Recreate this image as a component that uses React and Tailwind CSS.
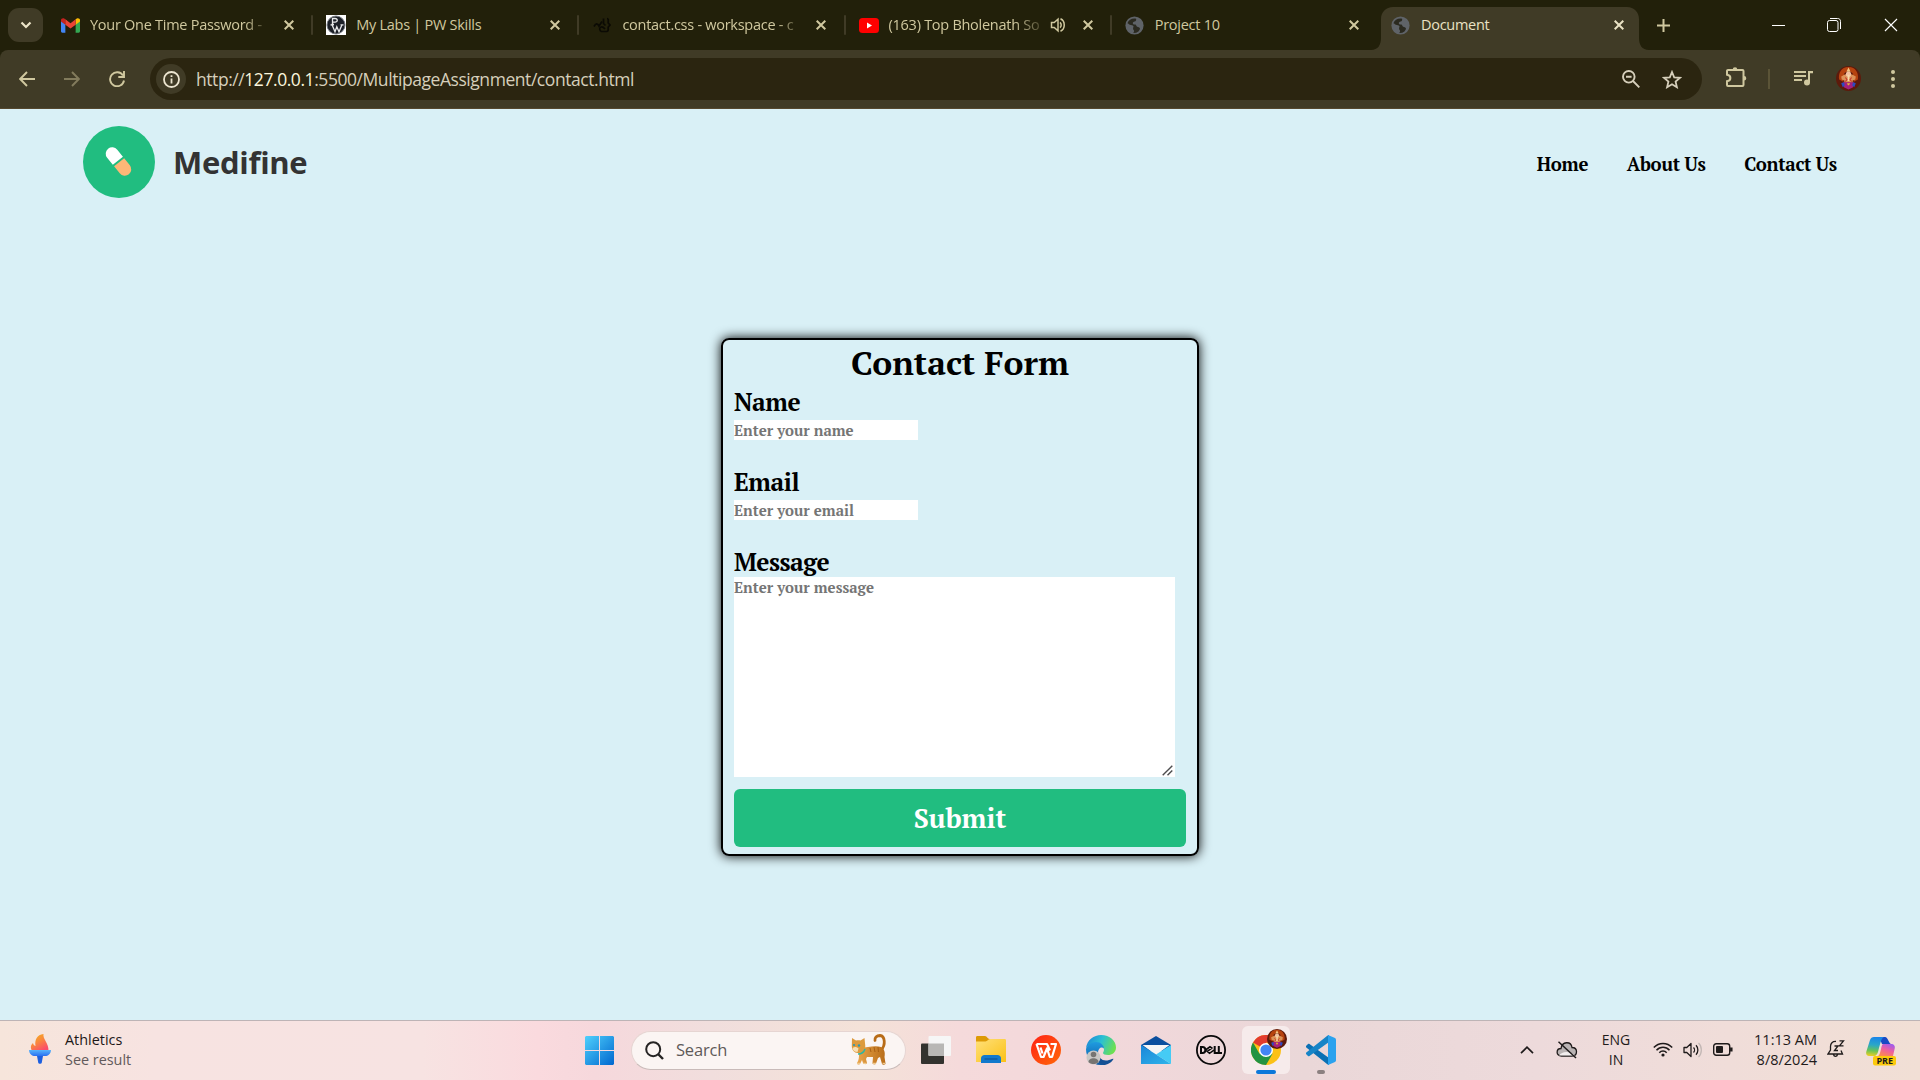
import React from 'react';

const GmailIcon = () => (
  <svg width="19" height="15" viewBox="0 0 24 18" className="shrink-0">
    <path fill="#4285f4" d="M0 3v13.400C0 17.300.7 18 1.600 18H5.500V7.500z" />
    <path fill="#34a853" d="M24 3v13.400c0 .9-.7 1.600-1.600 1.600H18.500V7.500z" />
    <path fill="#fbbc04" d="M18.500 1.200V8l5.500-4.200V2.200C24 .2 21.600-.8 20 .2z" />
    <path fill="#c5221f" d="M0 2.200v1.600L5.500 8V1.200L4 .2C2.400-.8 0 .2 0 2.200z" />
    <path fill="#ea4335" d="M5.500 1.200V8l6.500 4.900L18.500 8V1.200L12 6z" />
  </svg>
);

const PwIcon = () => (
  <svg width="20" height="20" viewBox="0 0 20 20" className="shrink-0">
    <rect width="20" height="20" fill="#fff" />
    <circle cx="10" cy="10" r="9" fill="#1c2027" stroke="#777b82" strokeWidth="1" />
    <g fill="none" stroke="#e8e9ea" strokeWidth="1.300">
      <path d="M6.500 9.500V3.500h2.500c3 0 3 3.700 0 3.700H6.500M5.500 9.500h2.500" />
      <path d="M6 9.800l3 7 1.800-5 2.200 5 3-7M4.500 9.800h3M14.500 9.800h3" />
    </g>
  </svg>
);

const CssIcon = () => (
  <svg width="18" height="16" viewBox="0 0 18 16" fill="none" stroke="#0b0a04" strokeWidth="1.700" className="shrink-0">
    <path d="M1 9.500C3 6 4.500 6 6 9l3-4.500" />
    <path d="M14 1.500c2 0 1 3 1.200 4.500L17 8l-1.800 2c-.2 2 .6 4.500-1.700 4.500H8.500C6.500 14 6 10.500 8 10c1.800-.5 3 .8 4 2" />
    <path d="M10.500 1.500v5l2 2" />
  </svg>
);

const YoutubeIcon = () => (
  <svg width="20" height="15" viewBox="0 0 20 15" className="shrink-0">
    <rect width="20" height="15" rx="3.500" fill="#f00" />
    <path d="M8 4.500v6l5-3z" fill="#fff" />
  </svg>
);

const GlobeIcon = () => (
  <svg width="19" height="19" viewBox="0 0 24 24" className="shrink-0">
    <circle cx="12" cy="12" r="11.500" fill="#5f6368" />
    <path fill="#2b2a20" d="M14 3.500c.5 1.800-.2 3-1.800 3.600-1.400.5-2.800 1.200-2.200 2.600.5 1.300 2 .6 3.300 1.100 1.100.5.800 1.700 1.700 2.400 1.400 1.100 3.700.8 3.900 2.700.1 1.600-1.200 2.400-1.900 3.600a9.500 9.500 0 0 1-6.500 2c.3-1 1-1.400 1-2.500 0-1.200-1.200-1.500-1.300-2.900-.1-1.300.8-2.200.4-3.400-.7-1.500-2.900-1-4.400-1.700C5 10.500 4.500 9.300 3 9c1.500-4 6-6.500 11-5.500z" />
  </svg>
);

const Cross = ({ size = 10, w = 2 }) => (
  <svg width={size} height={size} viewBox="0 0 10 10" fill="none" stroke="currentColor" strokeWidth={w} className="shrink-0">
    <path d="M.7.7l8.600 8.600M9.300.7L.7 9.300" />
  </svg>
);

const Speaker = () => (
  <svg width="16" height="16" viewBox="0 0 16 16" fill="none" stroke="currentColor" strokeWidth="1.500" className="shrink-0">
    <path d="M1.500 5.500v5h2.700L8 13.800V2.200L4.200 5.500z" strokeLinejoin="miter" />
    <path d="M10 5.300c1.600 1.300 1.600 4.100 0 5.400M10.500 1.800c5 2.200 5 10.200 0 12.400" />
  </svg>
);

const Avatar = ({ className }) => (
  <svg viewBox="0 0 24 24" className={className}>
    <circle cx="12" cy="12" r="12" fill="#5d1a0b" />
    <path d="M12 1C5 1 2 7 3 13l4 2 1-8 4-3 4 3 1 8 4-2c1-6-2-12-9-12z" fill="#b6430f" />
    <path d="M12 1.500l-2 4h4z" fill="#f3c884" />
    <path d="M8 8.500c2-1.500 6-1.500 8 0l3 1.500-.5 3-2.500 1v2H8v-2l-2.500-1L5 10z" fill="#dc9257" />
    <circle cx="12" cy="7.800" r="2.500" fill="#f3c0a0" />
    <path d="M11.300 8.500h1.700l-.3 6h-1.500z" fill="#f6d9a8" />
    <path d="M9 11l1.500 2L9 15M15 11l-1.500 2 1.500 2" stroke="#c7362d" fill="none" />
    <path d="M7 15.500h10l-.5 5L12 22.500l-4.500-2z" fill="#a5207d" />
    <path d="M5 16.500l2.500-1 1 3-2 2zM19 16.500l-2.500-1-1 3 2 2z" fill="#2c4bc0" />
    <path d="M10.500 16.500h3l-1 2h-1z" fill="#e6b32e" />
  </svg>
);

const tabs = [
  { title: 'Your One Time Password -', icon: <GmailIcon />, mask: '[mask-image:linear-gradient(to_right,#000_155px,transparent_180px)]' },
  { title: 'My Labs | PW Skills', icon: <PwIcon /> },
  { title: 'contact.css - workspace - c', icon: <CssIcon />, mask: '[mask-image:linear-gradient(to_right,#000_155px,transparent_182px)]' },
  { title: '(163) Top Bholenath So', icon: <YoutubeIcon />, mask: '[mask-image:linear-gradient(to_right,#000_125px,transparent_160px)]', audio: true },
  { title: 'Project 10', icon: <GlobeIcon />, last: true },
  { title: 'Document', icon: <GlobeIcon />, active: true },
];

function Tab({ tab }) {
  return (
    <div className={`relative flex h-[50px] w-[266.2px] shrink-0 items-center ${tab.active ? 'text-[#e9e2c4]' : 'text-[#d0c89f]'}`}>
      {tab.active && (
        <svg className="absolute bottom-0 left-[-7px]" width="278" height="43" viewBox="0 0 278 43" fill="#403b26">
          <path d="M0 43C7 43 10 38 10 31V12C10 5 15 0 22 0H256c7 0 12 5 12 12V31c0 7 3 12 10 12z" />
        </svg>
      )}
      <div className="relative ml-[13px] flex w-5 shrink-0 justify-center">{tab.icon}</div>
      <div className={`relative ml-2.5 whitespace-nowrap text-[14.500px] tracking-[-0.270px] ${tab.audio ? 'w-[153px]' : 'w-[177px]'} ${tab.mask ?? ''}`}>
        {tab.title}
      </div>
      {tab.audio && <div className="ml-2 w-4"><Speaker /></div>}
      <div className={`relative ${tab.active ? 'ml-4' : 'ml-[17px]'}`}><Cross /></div>
      {!tab.active && !tab.last && <div className="ml-auto h-5 w-0.5 rounded bg-[#403b26]" />}
    </div>
  );
}

function TabStrip() {
  return (
    <div className="flex h-[50px] bg-[#22200a]">
      <div className="flex w-[47px] shrink-0 items-center pl-2">
        <div className="flex h-[34px] w-[35px] items-center justify-center rounded-[11px] bg-[#403b26]">
          <svg width="12" height="8" viewBox="0 0 12 8" fill="none" stroke="#ece5c8" strokeWidth="2.200"><path d="M1.500 1.500L6 6l4.500-4.500" /></svg>
        </div>
      </div>
      {tabs.map((t) => <Tab key={t.title} tab={t} />)}
      <div className="ml-[13px] flex items-center text-[#d0c89f]">
        <svg width="13" height="13" viewBox="0 0 13 13" stroke="currentColor" strokeWidth="2"><path d="M6.500 0v13M0 6.500h13" /></svg>
      </div>
      <div className="ml-auto flex items-center text-white">
        <div className="flex w-[56px] justify-center"><div className="h-px w-[13px] bg-white" /></div>
        <div className="flex w-[56px] justify-center">
          <svg width="14" height="14" viewBox="0 0 14 14" fill="none" stroke="currentColor">
            <rect x=".5" y="2.500" width="10.500" height="11" rx="2" />
            <path d="M3 .5h7.500c2 0 3 1 3 3V11" />
          </svg>
        </div>
        <div className="mr-[1px] flex w-[57px] justify-center"><Cross size={14} w={0.8} /></div>
      </div>
    </div>
  );
}

function Toolbar() {
  return (
    <div className="bg-[#22200a]">
      <div className="flex h-[59px] items-center rounded-t-lg border-b border-[#55482f] bg-[#403b26] text-[#d0c89f]">
        <svg className="ml-[19px]" width="16" height="16" viewBox="0 0 16 16" fill="none" stroke="currentColor" strokeWidth="1.900"><path d="M16 8H1.500M8 1L1.200 8 8 15" /></svg>
        <svg className="ml-[29px] text-[#827b5c]" width="16" height="16" viewBox="0 0 16 16" fill="none" stroke="currentColor" strokeWidth="1.900"><path d="M0 8h14.500M8 1l6.800 7L8 15" /></svg>
        <svg className="ml-[29px]" width="16" height="16" viewBox="0 0 16 16" fill="none" stroke="currentColor" strokeWidth="1.900"><path d="M14 4.500A7 7 0 1 0 15 9.500M15 0v6H9.300" /></svg>
        <div className="ml-[25px] flex h-[42px] w-[1552px] items-center rounded-full bg-[#2b2510] text-[#d6cfbb]">
          <div className="ml-1.5 flex size-[30px] items-center justify-center rounded-full bg-[#403b26] text-[#ece5d0]">
            <svg width="17" height="17" viewBox="0 0 17 17" fill="none" stroke="currentColor" strokeWidth="1.800"><circle cx="8.500" cy="8.500" r="7.500" /><path d="M8.500 7.500v5M8.500 4.300v1.800" /></svg>
          </div>
          <div className="ml-[10px] mt-px whitespace-nowrap text-[17.500px] tracking-[-0.440px]">http://<span className="text-[#fbf6dd]">127.0.0.1</span>:5500/MultipageAssignment/contact.html</div>
          <svg className="ml-auto" width="18" height="18" viewBox="0 0 18 18" fill="none" stroke="currentColor" strokeWidth="1.900"><circle cx="6.800" cy="6.800" r="5.800" /><path d="M11 11l6.300 6.300M4 6.800h5.600" /></svg>
          <svg className="mr-5 ml-[22px]" width="20" height="19" viewBox="0 0 20 19" fill="none" stroke="currentColor" strokeWidth="1.800"><path d="M10 2l2.200 5.300 5.800.5-4.400 3.800 1.300 5.600-4.900-3-4.900 3 1.300-5.600L2 7.800l5.800-.5z" /></svg>
        </div>
        <svg className="mb-1 ml-[23px]" width="22" height="21" viewBox="0 0 21 21" fill="none" stroke="currentColor" strokeWidth="2">
          <path d="M2.500 3H17a1 1 0 0 1 1 1V18a1 1 0 0 1-1 1H2.500a1 1 0 0 1-1-1v-3.800c4.500-.5 4.500-6 0-6.500V4a1 1 0 0 1 1-1z" />
          <path d="M7.200 2.500a2.300 2.300 0 0 1 4.600 0zM18.500 9a2.300 2.300 0 0 1 0 4.600z" fill="currentColor" stroke="none" />
        </svg>
        <div className="ml-[21px] h-5 w-0.5 bg-[#5b5437]" />
        <svg className="mb-0.5 ml-6" width="20" height="17" viewBox="0 0 20 17" fill="currentColor">
          <path d="M0 1h12v2H0zM0 5h12v2H0zM0 9h8v2H0zM14 1h5v2.200h-3v9h-2z" /><circle cx="13" cy="12.500" r="3" />
        </svg>
        <Avatar className="mb-0.5 ml-[22px] size-[25px]" />
        <svg className="ml-[30px]" width="4" height="18" viewBox="0 0 4 18" fill="currentColor"><circle cx="2" cy="2" r="2" /><circle cx="2" cy="9" r="2" /><circle cx="2" cy="16" r="2" /></svg>
      </div>
    </div>
  );
}

function SiteHeader() {
  return (
    <header className="flex h-[106px] items-center justify-between pl-[83px] pr-[83px]">
      <div className="flex items-center">
        <svg width="72" height="72" viewBox="0 0 72 72">
          <circle cx="36" cy="36" r="36" fill="#21bd80" />
          <g transform="rotate(-39 35.500 35.500)">
            <path d="M29 34.500V25.500a6.500 6.500 0 0 1 13 0v9z" fill="#fff" />
            <path d="M29 36.500v9a6.500 6.500 0 0 0 13 0v-9z" fill="#fdb777" />
          </g>
        </svg>
        <div className="ml-[18px] mt-[1px] text-[31px] font-bold tracking-[-0.300px] text-[#333]">Medifine</div>
      </div>
      <nav className="mt-1 flex gap-[38.500px] font-['PT_Serif','Liberation_Serif',serif] text-[18.600px] font-bold leading-6 tracking-[-0.270px] text-black">
        <a>Home</a><a>About Us</a><a>Contact Us</a>
      </nav>
    </header>
  );
}

function Field({ label, placeholder }) {
  return (
    <div className="mb-[24px] flex h-[56px] flex-col">
      <label className="h-9 text-[24.500px] font-bold leading-[36px] tracking-[-0.450px]">{label}</label>
      <input placeholder={placeholder} className="h-5 w-[184px] bg-white text-[15px] font-bold leading-5 placeholder:text-[#757575]" />
    </div>
  );
}

function ContactForm() {
  return (
    <form className="mx-auto mt-[123px] flex h-[518px] w-[478px] flex-col rounded-lg border-2 border-black px-[11px] font-['PT_Serif','Liberation_Serif',serif] text-black shadow-[0_0_12px_#000]">
      <h1 className="h-[44px] text-center text-[33.600px] font-bold leading-[46px]">Contact Form</h1>
      <Field label="Name" placeholder="Enter your name" />
      <Field label="Email" placeholder="Enter your email" />
      <label className="h-[33px] text-[24.500px] font-bold leading-[36px] tracking-[-0.500px]">Message</label>
      <div className="relative h-[200px] w-[441px]">
        <textarea placeholder="Enter your message" className="block h-full w-full resize-none bg-white text-[15px] font-bold leading-5 placeholder:text-[#757575]" />
        <svg className="pointer-events-none absolute bottom-px right-0.5" width="11" height="11" viewBox="0 0 11 11" stroke="#4d4d4f" strokeWidth="1.400">
          <path d="M.7 10.300l9.600-9.600M5.500 10.300l4.800-4.800" />
        </svg>
      </div>
      <button type="button" className="mt-3 h-[58px] rounded-md bg-[#21bd80] text-[27px] font-bold text-white">Submit</button>
    </form>
  );
}

const Torch = () => (
  <svg width="22" height="30" viewBox="0 0 22 30">
    <defs>
      <linearGradient id="fl" x1="0" y1="0" x2=".6" y2="1"><stop offset="0" stopColor="#f2b619" /><stop offset=".5" stopColor="#f98a3c" /><stop offset="1" stopColor="#fb4c6b" /></linearGradient>
      <linearGradient id="bl" x1="0" y1="0" x2="0" y2="1"><stop offset="0" stopColor="#58b4fb" /><stop offset="1" stopColor="#2a6ff0" /></linearGradient>
    </defs>
    <path d="M3 17C1 13 2 11 4 9c.3 1.500 1 2.500 2.500 3C5.500 6 8 .8 14.500 0 13.500 5 20 9 19.500 17z" fill="url(#fl)" />
    <path d="M0 16h22c-.3 4-3 6-6 6H6c-3 0-5.700-2-6-6z" fill="url(#bl)" />
    <path d="M8 22h6l-1.300 7c-.2 1-3.200 1-3.400 0z" fill="#1c5fe0" />
  </svg>
);

const WindowsLogo = () => (
  <svg width="29" height="29" viewBox="0 0 29 29">
    <defs><linearGradient id="win" gradientUnits="userSpaceOnUse" x1="0" y1="0" x2="29" y2="29"><stop offset="0" stopColor="#4fd0fc" /><stop offset="1" stopColor="#0067cf" /></linearGradient></defs>
    <path d="M1 0h13v14H0V1zM15 0h13l1 1v13H15zM0 15h14v14H1l-1-1zM15 15h14v13l-1 1H15z" fill="url(#win)" />
  </svg>
);

const Cat = () => (
  <svg width="37" height="31" viewBox="0 0 37 31">
    <defs><linearGradient id="cat" x1="0" y1="0" x2="1" y2="0"><stop offset="0" stopColor="#eaa64c" /><stop offset="1" stopColor="#b86c18" /></linearGradient></defs>
    <path d="M31 16c5-5 4-14-1-14.500-3.500 0-5.500 2.500-5 5" fill="none" stroke="#b86c18" strokeWidth="2.800" strokeLinecap="round" />
    <path d="M11 14c6-1 15-3 20-1 3 1.500 4.500 5 3.500 10l1 6.500c0 1.500-3 1.500-3.500.5L30 23l-2 1-2 5.500c-.5 1.500-4 1-3.500-.5L23 23h-6l-1 2 1 4c0 1.500-3.500 1.500-4 0l-1-3-2 4c-1 1-3.500.5-3-1 2-3 2-6 2-9z" fill="url(#cat)" />
    <path d="M2 4l4 2.500C8 6 9 6 10.500 6.500L14.500 4l.8 8c0 5-3.500 7-7.500 7-3.500 0-6-3-6-7z" fill="#dc9a3e" />
    <path d="M2.500 14c2-1.500 4-1.500 6 .5l-1 3.500c-3 0-4.500-1.500-5-4z" fill="#f8dfb4" />
    <circle cx="4" cy="11" r="1.100" fill="#2a99b4" /><circle cx="9" cy="11.500" r="1.200" fill="#2a99b4" />
    <path d="M8 20c3.500 0 6-2 7-5" fill="none" stroke="#2fb5a0" strokeWidth="1.500" />
    <path d="M20 14l1 4M24 13l1 5M28 13l.5 5" stroke="#a85f14" strokeWidth="1" />
    <path d="M7 29.300h3M13 29.300h3.500M23 29.300h3M32.500 29.300H35" stroke="#f0c98c" strokeWidth="1.300" />
  </svg>
);

const TaskView = () => (
  <svg width="30" height="28" viewBox="0 0 30 28">
    <rect y="7.500" width="23" height="20.500" rx="1" fill="#33332f" />
    <rect x="7.500" width="22.500" height="20" rx="1" fill="#f6f6f6" />
    <path d="M7.500 7.500H23V20H8.500a1 1 0 0 1-1-1z" fill="#b8b7b5" />
  </svg>
);

const Explorer = () => (
  <svg width="30" height="27" viewBox="0 0 30 27">
    <defs><linearGradient id="ex" x1="0" y1="0" x2="1" y2="1"><stop offset="0" stopColor="#ffe07a" /><stop offset="1" stopColor="#fbc116" /></linearGradient></defs>
    <path d="M0 1.500C0 .5.500 0 1.500 0H9c2 0 2.500 3 4.500 3H28v6H0z" fill="#dd9a05" />
    <path d="M0 5.500h9.500C11.500 5.500 12 3 14 3h14.500c1 0 1.500.5 1.500 1.500V26H0z" fill="url(#ex)" />
    <path d="M5 27v-4.500c0-2 1.500-3.500 3.500-3.500h13c2 0 3.500 1.500 3.500 3.500V27z" fill="#1279cc" />
    <path d="M8.500 23h13" stroke="#0c4f8d" />
  </svg>
);

const Wps = () => (
  <svg width="30" height="30" viewBox="0 0 30 30">
    <defs><linearGradient id="wps" x1="0" y1="0" x2="1" y2="1"><stop offset="0" stopColor="#ff2016" /><stop offset="1" stopColor="#ff6a08" /></linearGradient></defs>
    <circle cx="15" cy="15" r="15" fill="url(#wps)" />
    <path d="M5.500 9H16l3 6.500M5.500 9l4.500 13h2.500L16 13.500l2.800 8.500h2.200L25 9h-5.500M9.500 12.500l2 6" fill="none" stroke="#fff" strokeWidth="2.200" strokeLinejoin="round" />
  </svg>
);

const Edge = () => (
  <svg width="31" height="30" viewBox="0 0 31 30">
    <defs>
      <linearGradient id="e1" x1="0" y1=".2" x2="1" y2=".5"><stop offset="0" stopColor="#1b87d8" /><stop offset=".5" stopColor="#2bc0d3" /><stop offset="1" stopColor="#6ee050" /></linearGradient>
      <linearGradient id="e2" x1="0" y1="0" x2="0" y2="1"><stop offset="0" stopColor="#1f9be0" /><stop offset="1" stopColor="#0c59a4" /></linearGradient>
    </defs>
    <path d="M0 13C1 5 8 0 15 0c9 0 15 6 15 12.500 0 5-4 7.500-8 7.500-3 0-5-1-5-2 0-.8 1-1.500 1-3.500 0-3-3-6-8-6-4 0-8 2-10 4.500z" fill="url(#e1)" />
    <path d="M0 14c1-4 6-7 10-7 5 0 8 3.500 8 6.500-2-2-6-1-6 5 0 5 4 9.500 9 9.500-2 1.500-4 2-6.500 2C6 30 0 23 0 14z" fill="url(#e2)" />
    <path d="M12 17c0 6 5 10 11 8 2-.5 4-2 4.500-1-2 3.500-6 6-10 6-5.500-1-8-7-5.500-13z" fill="#134f93" />
    <circle cx="7.500" cy="22.500" r="7" fill="#c9c7c5" /><circle cx="7.500" cy="19.500" r="2.800" fill="#767472" /><path d="M2.500 27c0-5 10-5 10 0-2.500 2.800-7.500 2.800-10 0z" fill="#767472" />
  </svg>
);

const Mail = () => (
  <svg width="30" height="28" viewBox="0 0 30 28">
    <defs><linearGradient id="ml" x1="0" y1="0" x2="1" y2="1"><stop offset="0" stopColor="#1b86d8" /><stop offset="1" stopColor="#2fb4ea" /></linearGradient></defs>
    <path d="M0 9L15 0l15 9v6H0z" fill="#0a4f9e" />
    <path d="M1.500 9h27L15 19z" fill="#f5f5f5" />
    <path d="M0 9l16 10 14 9H0z" fill="url(#ml)" />
    <path d="M30 9v19L15 18.500z" fill="#45cbf5" />
  </svg>
);

const Dell = () => (
  <svg width="30" height="30" viewBox="0 0 30 30">
    <circle cx="15" cy="15" r="14.100" fill="none" stroke="#0a0a0a" strokeWidth="1.800" />
    <g fill="none" stroke="#0a0a0a" strokeWidth="2">
      <path d="M5 12v6H6.500c3.800 0 3.800-6 0-6z" />
      <path d="M9.500 15l4.500-3.200 2.500 1.700M11 16.600l4.500-3.200M9.500 15l4 3.300 4.500-3.200" strokeWidth="1.600" />
      <path d="M18.700 11v7H22M22.800 11v7h3.200" />
    </g>
  </svg>
);

const Chrome = () => (
  <svg width="30" height="30" viewBox="0 0 30 30">
    <circle cx="15" cy="15" r="15" fill="#fbc116" />
    <path d="M15 15L2 7.500A15 15 0 0 1 28 7.500H15z" fill="#e33b2e" />
    <path d="M2 7.500A15 15 0 0 0 15 30l6.500-11.200L15 15l-6.500 3.800z" fill="#229342" />
    <circle cx="15" cy="15" r="7" fill="#fff" /><circle cx="15" cy="15" r="5.600" fill="#4285f4" />
  </svg>
);

const VsCode = () => (
  <svg width="30" height="30" viewBox="0 0 30 30">
    <path d="M0 11l2-2c.5-.4 1-.4 1.500 0L23 23v7c-.6 0-1.200-.2-1.700-.7L.3 12.500C-.2 12-.2 11.500 0 11z" fill="#0b70b4" />
    <path d="M0 19l2 2c.5.4 1 .4 1.500 0L23 7V0c-.6 0-1.200.2-1.700.7L.3 17.500c-.5.500-.5 1-.3 1.500z" fill="#1684c7" />
    <path d="M22 0l7 3c.7.4 1 .8 1 1.500v21c0 .7-.3 1.100-1 1.500l-7 3z" fill="#2ba2ee" />
  </svg>
);

const dockItems = [
  { id: 'taskview', icon: <TaskView /> },
  { id: 'explorer', icon: <Explorer /> },
  { id: 'wps', icon: <Wps /> },
  { id: 'edge', icon: <Edge /> },
  { id: 'mail', icon: <Mail /> },
  { id: 'dell', icon: <Dell /> },
  { id: 'chrome', icon: <Chrome />, focused: true },
  { id: 'vscode', icon: <VsCode />, running: true },
];

const Copilot = () => (
  <svg width="30" height="30" viewBox="0 0 30 30">
    <defs>
      <linearGradient id="c1" x1=".3" y1="0" x2=".2" y2="1"><stop offset="0" stopColor="#1a86e8" /><stop offset=".4" stopColor="#2aa7c8" /><stop offset=".7" stopColor="#65c35a" /><stop offset="1" stopColor="#f0cf20" /></linearGradient>
      <linearGradient id="c2" x1=".8" y1="0" x2=".3" y2="1"><stop offset="0" stopColor="#9b5cf0" /><stop offset=".5" stopColor="#ee5fa0" /><stop offset="1" stopColor="#fb8a50" /></linearGradient>
    </defs>
    <path d="M13 1h6c3 0 3.500 6 6 7h-9z" fill="#1849c4" />
    <path d="M8 1h10c-3 1-4 8-5.500 13-1 4-2 6-5 6H3c-2.500 0-3.500-2-2.500-5L4 4c.7-2 2-3 4-3z" fill="url(#c1)" />
    <path d="M17 8h8c3 0 4.500 2 3.600 5L27 20H12c3-1 3-12 5-12z" fill="url(#c2)" />
    <rect x="7" y="20" width="23" height="9.500" rx="2" fill="#fcca0c" />
    <text x="18.700" y="28" fontSize="9" fontWeight="700" textAnchor="middle" fill="#1a1a1a" fontFamily="Open Sans">PRE</text>
  </svg>
);

function Tray() {
  return (
    <div className="ml-auto flex h-full items-center text-[#1f1b1b]">
      <svg className="mb-0.5" width="14" height="8" viewBox="0 0 14 8" fill="none" stroke="currentColor" strokeWidth="1.700"><path d="M1 7.200l6-6 6 6" /></svg>
      <svg className="mb-0.5 ml-[22px]" width="22" height="18" viewBox="0 0 22 18" fill="none" stroke="currentColor" strokeWidth="1.300">
        <path d="M5.500 15C-.5 15 0 7.500 5 7.500 6 0 15 0 16 6.500c6 0 6 8.500 0 8.500z" fill="#bab4b4" />
        <path d="M3 14.500c3-4 10-5 16 0z" fill="#f2eeee" stroke="none" />
        <path d="M2.500.8L20 17" strokeWidth="1.500" />
      </svg>
      <div className="mb-0.5 ml-[21px] w-[34px] text-center text-[14px] leading-5">ENG<br />IN</div>
      <svg className="mb-0.5 ml-5" width="20" height="15" viewBox="0 0 20 15" fill="none" stroke="currentColor" strokeWidth="1.500">
        <path d="M.8 5.500c5-5.500 13.400-5.500 18.400 0M3.500 8.200c3.600-4 9.400-4 13 0M6.300 10.800c2-2.300 5.400-2.300 7.400 0" /><circle cx="10" cy="13" r="1.600" fill="currentColor" stroke="none" />
      </svg>
      <svg className="mb-0.5 ml-2.5" width="20" height="16" viewBox="0 0 20 16" fill="none" stroke="currentColor" strokeWidth="1.300">
        <path d="M1 5.500v5h2.800L8 14.500v-13L3.800 5.500z" strokeLinejoin="round" /><path d="M10.500 5.500c1.300 1.300 1.300 3.700 0 5M13 3.300c2.500 2.500 2.500 6.900 0 9.400" /><path d="M15.500 1c3.800 3.500 3.800 10.500 0 14" stroke="#c3b8b5" />
      </svg>
      <svg className="mb-0.5 ml-2.5" width="20" height="13" viewBox="0 0 20 13" fill="none" stroke="currentColor" strokeWidth="1.400">
        <rect x=".7" y=".7" width="16" height="11.600" rx="2.500" /><rect x="3" y="3" width="7" height="7" rx="1" fill="currentColor" stroke="none" /><path d="M18.300 4.500v4" strokeWidth="2.500" />
      </svg>
      <div className="mb-0.5 ml-4 w-[68px] whitespace-nowrap text-right text-[14.500px] leading-5">11:13 AM<br />8/8/2024</div>
      <svg className="mb-1 ml-[10px]" width="18" height="18" viewBox="0 0 18 18" fill="none" stroke="currentColor" strokeWidth="1.300">
        <path d="M9 1.500C5.500 1.200 3.500 3.500 3.500 6.500V10L1 14h14.500L14 10.500M6.500 14.500c.5 2.500 3.500 2.500 4 0M7.500 6h3.500L7.500 10.500H11M12.500.8h4l-4 5h4" />
      </svg>
      <div className="ml-[21px] mr-6"><Copilot /></div>
    </div>
  );
}

function Taskbar() {
  return (
    <footer className="flex h-[60px] items-center border-t border-[#bdb4b6] bg-[linear-gradient(90deg,#f6e5db_0%,#f7e3e1_8%,#f7e3e2_22%,#fadade_28%,#f6d8dc_31%,#f1dedd_37%,#f4e2d8_45%,#f5dadb_50%,#f3d8db_56%,#ead7d8_68%,#eddadb_80%,#f0ddd9_90%,#f1dfd5_100%)]">
      <div className="flex w-[585px] items-center pl-[29px]">
        <div className="mb-1"><Torch /></div>
        <div className="mb-0.5 ml-3.5 text-[14.400px] leading-5 text-[#1d1818]"><div>Athletics</div><div className="text-[#625a5b]">See result</div></div>
      </div>
      <WindowsLogo />
      <div className="ml-[17px] flex h-[39px] w-[275px] shrink-0 items-center rounded-full border border-[#e6d5d2] border-b-[#c9bbb9] bg-[#fbf5f3] pl-[13px] pr-[18px]">
        <svg width="19" height="19" viewBox="0 0 19 19" fill="none" stroke="#252323" strokeWidth="2"><circle cx="8.200" cy="8.200" r="7" /><path d="M13 13l5 5" strokeWidth="2.400" /></svg>
        <div className="ml-3 text-[16.500px] tracking-[-0.200px] text-[#5f5a59]">Search</div>
        <div className="ml-auto mb-0.5"><Cat /></div>
      </div>
      <div className="ml-[2.500px] flex h-full items-center">
        {dockItems.map((d) => (
          <div key={d.id} className="flex h-full w-[55px] items-center justify-center">
            <div className={`relative flex size-12 -translate-y-px items-center justify-center rounded-md ${d.focused ? 'bg-[#f6ebeb]' : ''}`}>
              {d.icon}
              {d.focused && <Avatar className="absolute right-[3px] top-[3px] size-5" />}
              {d.focused && <div className="absolute bottom-0 h-1 w-5 rounded-full bg-[#0b78da]" />}
              {d.running && <div className="absolute bottom-0 h-1 w-2 rounded-full bg-[#8b8080]" />}
            </div>
          </div>
        ))}
      </div>
      <Tray />
    </footer>
  );
}

export default function App() {
  return (
    <div className="flex h-[1080px] w-[1920px] flex-col overflow-hidden bg-[#d9f0f6] font-['Open_Sans','Noto_Sans',sans-serif]">
      <TabStrip />
      <Toolbar />
      <main className="min-h-0 flex-1">
        <SiteHeader />
        <ContactForm />
      </main>
      <Taskbar />
    </div>
  );
}
